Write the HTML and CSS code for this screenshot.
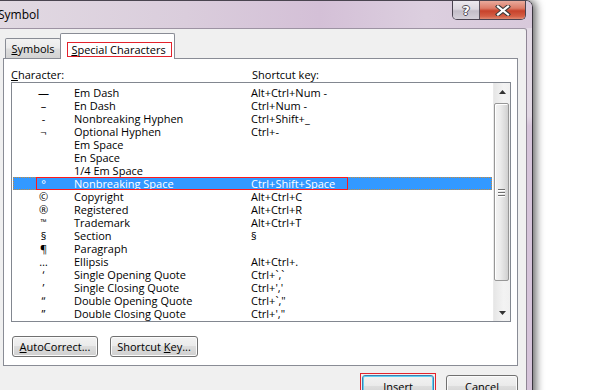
FILE: index.html
```html
<!DOCTYPE html>
<html>
<head>
<meta charset="utf-8">
<title>Symbol</title>
<link rel="stylesheet" href="styles.css">
</head>
<body>
<div class="window">
  <div class="titlebar">
    <span class="title">Symbol</span>
    <div class="caps">
      <div class="cap help"><span class="q">?</span></div>
      <div class="cap close">
        <svg width="16" height="11" viewBox="0 0 16 11"><path d="M3 1.5 L13 9.5 M13 1.5 L3 9.5" stroke="#3a3a3a" stroke-width="4.2" stroke-linecap="square"/><path d="M3 1.5 L13 9.5 M13 1.5 L3 9.5" stroke="#ffffff" stroke-width="2.2" stroke-linecap="square"/></svg>
      </div>
    </div>
  </div>
  <div class="client">
    <div class="tabs">
      <div class="tab"><span><u>S</u>ymbols</span></div>
      <div class="tab active"><span class="hl"><u>S</u>pecial Characters</span></div>
    </div>
    <div class="panel">
      <div class="headers"><span class="h-char"><u>C</u>haracter:</span><span>Shortcut key:</span></div>
      <div class="listbox">
        <div class="rows">
          <div class="row"><span class="sym">—</span><span class="name">Em Dash</span><span class="key">Alt+Ctrl+Num -</span></div>
          <div class="row"><span class="sym">–</span><span class="name">En Dash</span><span class="key">Ctrl+Num -</span></div>
          <div class="row"><span class="sym">-</span><span class="name">Nonbreaking Hyphen</span><span class="key">Ctrl+Shift+_</span></div>
          <div class="row"><span class="sym">¬</span><span class="name">Optional Hyphen</span><span class="key">Ctrl+-</span></div>
          <div class="row"><span class="sym"></span><span class="name">Em Space</span><span class="key"></span></div>
          <div class="row"><span class="sym"></span><span class="name">En Space</span><span class="key"></span></div>
          <div class="row"><span class="sym"></span><span class="name">1/4 Em Space</span><span class="key"></span></div>
          <div class="row selected"><span class="sym">°</span><span class="name">Nonbreaking Space</span><span class="key">Ctrl+Shift+Space</span><span class="mark"></span></div>
          <div class="row"><span class="sym">©</span><span class="name">Copyright</span><span class="key">Alt+Ctrl+C</span></div>
          <div class="row"><span class="sym">®</span><span class="name">Registered</span><span class="key">Alt+Ctrl+R</span></div>
          <div class="row"><span class="sym small">™</span><span class="name">Trademark</span><span class="key">Alt+Ctrl+T</span></div>
          <div class="row"><span class="sym">§</span><span class="name">Section</span><span class="key">§</span></div>
          <div class="row"><span class="sym">¶</span><span class="name">Paragraph</span><span class="key"></span></div>
          <div class="row"><span class="sym">…</span><span class="name">Ellipsis</span><span class="key">Alt+Ctrl+.</span></div>
          <div class="row"><span class="sym">‘</span><span class="name">Single Opening Quote</span><span class="key">Ctrl+`,`</span></div>
          <div class="row"><span class="sym">’</span><span class="name">Single Closing Quote</span><span class="key">Ctrl+','</span></div>
          <div class="row"><span class="sym">“</span><span class="name">Double Opening Quote</span><span class="key">Ctrl+`,"</span></div>
          <div class="row"><span class="sym">”</span><span class="name">Double Closing Quote</span><span class="key">Ctrl+',"</span></div>
        </div>
        <div class="scrollbar">
          <div class="sb-btn"><svg width="7" height="4" viewBox="0 0 7 4"><path d="M0 4 L3.5 0 L7 4 Z" fill="#333"/></svg></div>
          <div class="sb-track">
            <div class="thumb"><div class="grip"><i></i><i></i><i></i></div></div>
          </div>
          <div class="sb-btn"><svg width="7" height="4" viewBox="0 0 7 4"><path d="M0 0 L7 0 L3.5 4 Z" fill="#333"/></svg></div>
        </div>
      </div>
      <div class="panel-buttons">
        <button class="btn w86"><u>A</u>utoCorrect...</button>
        <button class="btn w88">Shortcut <u>K</u>ey...</button>
      </div>
    </div>
    <div class="dialog-buttons">
      <div class="redbox"><button class="btn default w72"><u>I</u>nsert</button></div>
      <button class="btn w72 cancel">Cancel</button>
    </div>
  </div>
</div>
</body>
</html>
```

FILE: styles.css
```css
* { box-sizing: border-box; }
html, body { margin: 0; padding: 0; }
body {
  width: 590px;
  height: 390px;
  overflow: hidden;
  background: #ffffff;
  font-family: "Open Sans", "Noto Sans", sans-serif;
  font-size: 11px;
  color: #000;
}
u { text-decoration: underline; text-underline-offset: 1px; }

.window {
  width: 533px;
  height: 430px;
  border-top: 1px solid #4a4550;
  border-right: 1px solid #3a363e;
  border-top-right-radius: 7px;
  background: linear-gradient(to bottom, #e4dbe6 0px, #e2d8e4 115px, #d6c4da 125px, #d6c4da 100%);
  box-shadow: 3px 0 9px rgba(0,0,0,0.6);
  display: flex;
  flex-direction: column;
}

.titlebar {
  height: 27px;
  display: flex;
  align-items: flex-start;
  border-top-right-radius: 6px;
  background: linear-gradient(to right, #e1d9e2 0%, #dacddc 35%, #d4c0d7 60%, #dccfdf 80%, #d8c9db 100%);
}
.title {
  margin-left: -2px;
  margin-top: 6px;
  font-size: 12px;
  line-height: 16px;
  color: #000;
}
.caps {
  margin-left: auto;
  margin-right: 6px;
  display: flex;
  border: 1px solid #4a4350;
  border-top: none;
  border-radius: 0 0 5px 5px;
  overflow: hidden;
  height: 19px;
}
.cap {
  height: 18px;
  display: flex;
  align-items: center;
  justify-content: center;
}
.help {
  width: 27px;
  border-right: 1px solid #5a525e;
  background: linear-gradient(to bottom, #ece8ee 0%, #dcd7df 45%, #c3bdc8 55%, #d5d0d9 100%);
}
.help .q {
  font-family: "DejaVu Sans", sans-serif;
  font-weight: bold;
  font-size: 13px;
  line-height: 13px;
  color: #ffffff;
  text-shadow: -1px 0 #4f4a55, 1px 0 #4f4a55, 0 -1px #4f4a55, 0 1px #4f4a55;
}
.close {
  width: 45px;
  background: linear-gradient(to bottom, #e9aa9c 0%, #dc7c68 40%, #c7422b 55%, #d45e45 85%, #e08a72 100%);
}

.client {
  flex: 1;
  margin-right: 5px;
  background: #f0f0f0;
  border-top: 1px solid #9d93a3;
  border-right: 1px solid #8e8594;
  border-top-right-radius: 3px;
  padding: 4px 0 0 3px;
}

.tabs {
  display: flex;
  align-items: flex-end;
  height: 25px;
  padding-left: 2px;
}
.tab {
  height: 20px;
  width: 56px;
  border: 1px solid #898c95;
  border-bottom: none;
  border-radius: 2px 2px 0 0;
  background: linear-gradient(to bottom, #f2f2f2 0%, #ebebeb 45%, #dddddd 55%, #d3d3d3 100%);
  display: flex;
  justify-content: center;
  padding-top: 2px;
  line-height: 15px;
}
.tab.active {
  position: relative;
  z-index: 1;
  width: 115px;
  height: 26px;
  margin-left: -1px;
  margin-bottom: -1px;
  background: #ffffff;
  padding-top: 8px;
}
.hl {
  display: inline-block;
  height: 15px;
  line-height: 13px;
  border: 1px solid #e3222c;
  padding: 0 5px 0 3px;
  margin-left: 4px;
}

.panel {
  width: 515px;
  height: 308px;
  border: 1px solid #898c95;
  background: #ffffff;
  padding: 0 6px 0 7px;
}
.headers {
  height: 23px;
  padding-top: 8px;
  line-height: 15px;
  display: flex;
}
.h-char { width: 241px; }

.listbox {
  width: 500px;
  height: 240px;
  border: 1px solid #828790;
  display: flex;
  background: #fff;
}
.rows {
  flex: 1;
  padding: 3px 1px 0 1px;
}
.row {
  position: relative;
  height: 13px;
  line-height: 13px;
  display: flex;
  white-space: nowrap;
}
.sym { width: 61px; text-align: center; }
.sym.small { font-size: 8px; line-height: 11px; }
.name { width: 177px; }
.row.selected {
  z-index: 1;
  background: #3399ff;
  color: #ffffff;
  outline: 1px dotted #c98a3a;
  outline-offset: -1px;
}
.mark {
  position: absolute;
  z-index: 2;
  left: 23px;
  top: 0;
  width: 312px;
  height: 13px;
  border: 1px solid #ff1a1a;
}

.scrollbar {
  width: 17px;
  display: flex;
  flex-direction: column;
  background: linear-gradient(to right, #e6e6e6, #f3f3f3 60%, #f0f0f0);
  border-left: 1px solid #eaeaea;
}
.sb-btn {
  height: 17px;
  display: flex;
  align-items: center;
  justify-content: center;
}
.sb-track {
  flex: 1;
  padding: 3px 1px 0 0;
}
.thumb {
  height: 178px;
  border: 1px solid #979797;
  border-radius: 2px;
  background: linear-gradient(to right, #f4f4f4 0%, #ececec 40%, #dadada 80%, #cfcfcf 100%);
  box-shadow: inset 1px 1px 0 #ffffff;
  display: flex;
  align-items: center;
  justify-content: center;
}
.grip { display: flex; flex-direction: column; gap: 2px; }
.grip i {
  display: block;
  width: 7px;
  height: 1px;
  background: #6f6f6f;
  box-shadow: 0 1px 0 #ffffff;
}

.panel-buttons {
  display: flex;
  gap: 12px;
  margin-top: 14px;
  padding-left: 1px;
}
.btn {
  font-family: "Open Sans", "Noto Sans", sans-serif;
  font-size: 11px;
  color: #000;
  height: 21px;
  padding: 0;
  border: 1px solid #707070;
  border-radius: 3px;
  background: linear-gradient(to bottom, #f2f2f2 0%, #ebebeb 45%, #dddddd 50%, #cfcfcf 100%);
  box-shadow: inset 0 0 0 1px #fbfbfb;
  line-height: 17px;
}
.w86 { width: 86px; }
.w88 { width: 88px; }
.w72 { width: 72px; }

.dialog-buttons {
  width: 515px;
  display: flex;
  justify-content: flex-end;
  align-items: flex-start;
  gap: 10px;
  margin-top: 7px;
}
.redbox {
  border: 1px solid #e3222c;
  padding: 1px;
}
.btn.default {
  height: 23px;
  border-color: #3c7fb1;
  box-shadow: inset 0 0 0 1px #5fd0f2;
  line-height: 19px;
}
.btn.cancel {
  height: 23px;
  margin-top: 2px;
  line-height: 19px;
}
```
